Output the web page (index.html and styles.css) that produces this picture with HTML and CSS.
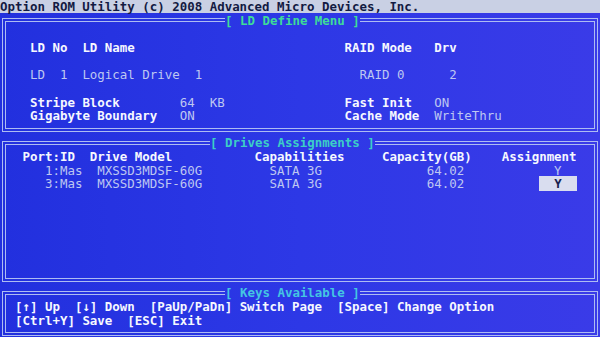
FILE: index.html
```
<!DOCTYPE html>
<html lang="en">

<head>
    <meta charset="UTF-8" />
    <title>Option ROM Utility</title>
    <link rel="stylesheet" href="styles.css">
</head>

<body>
    <div class="screen">
        <div class="titlebar">Option ROM Utility (c) 2008 Advanced Micro Devices, Inc.</div>

        <fieldset class="panel panel-ld">
            <legend class="legend-ld">[ LD Define Menu ]</legend>
            <div class="row"></div>
            <div class="row label">   LD No  LD Name                            RAID Mode   Drv</div>
            <div class="row"></div>
            <div class="row value">   LD  1  Logical Drive  1                     RAID 0      2</div>
            <div class="row"></div>
            <div class="row"><span class="label">   Stripe Block</span><span class="value">        64  KB</span><span class="label">                Fast Init</span><span class="value">   ON</span></div>
            <div class="row"><span class="label">   Gigabyte Boundary</span><span class="value">   ON</span><span class="label">                    Cache Mode</span><span class="value">  WriteThru</span></div>
        </fieldset>

        <fieldset class="panel panel-drives">
            <legend class="legend-drives">[ Drives Assignments ]</legend>
            <div class="row label">  Port:ID  Drive Model           Capabilities     Capacity(GB)    Assignment</div>
            <div class="row value">     1:Mas  MXSSD3MDSF-60G         SATA 3G              64.02            Y</div>
            <div class="row value">     3:Mas  MXSSD3MDSF-60G         SATA 3G              64.02          <span class="selected">  Y  </span></div>
            <div class="row"></div>
            <div class="row"></div>
            <div class="row"></div>
            <div class="row"></div>
            <div class="row"></div>
            <div class="row"></div>
        </fieldset>

        <fieldset class="panel panel-keys">
            <legend class="legend-keys">[ Keys Available ]</legend>
            <div class="row label"> [↑] Up  [↓] Down  [PaUp/PaDn] Switch Page  [Space] Change Option</div>
            <div class="row label"> [Ctrl+Y] Save  [ESC] Exit</div>
        </fieldset>
    </div>
</body>

</html>
```

FILE: styles.css
```
body {
    margin: 0;
    background: #2833e3;
    font-family: "DejaVu Sans Mono", "Liberation Mono", monospace;
    font-size: 12.45px;
    line-height: 13.65px;
    overflow: hidden;
}

.screen {
    width: 600px;
    height: 337px;
    background: linear-gradient(90deg, #2230de, #2d38e6 50%, #3a3be8);
    overflow: hidden;
}

.titlebar {
    height: 13px;
    background: #c9d0e4;
    color: #131a42;
    font-weight: bold;
    white-space: pre;
}

.panel {
    margin: 0 1.75px 4.8px;
    padding: 0 1.75px 4.8px;
    border: 4px double #aebcf2;
    min-width: 0;
}

.panel-ld {
    margin-top: 0.65px;
}

legend {
    padding: 0;
    font-weight: bold;
    white-space: pre;
}

.legend-ld {
    margin-left: 217.5px;
    color: #3fdc98;
}

.legend-drives {
    margin-left: 202.5px;
    color: #3ccfc6;
}

.legend-keys {
    margin-left: 217.5px;
    color: #44c6e2;
}

.row {
    height: 13.65px;
    white-space: pre;
}

.label {
    color: #f6f8ff;
    font-weight: bold;
}

.value {
    color: #bec7f1;
    font-weight: normal;
}

.selected {
    background: #d9ddef;
    color: #18204f;
    font-weight: bold;
}
```
